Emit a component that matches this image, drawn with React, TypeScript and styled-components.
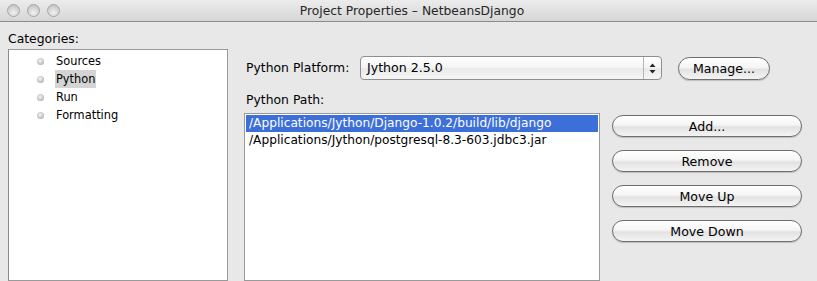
import React from 'react';
import styled, { createGlobalStyle } from 'styled-components';

const GlobalStyle = createGlobalStyle`
    html, body {
        margin: 0;
        padding: 0;
        background: #e8e8e8;
        overflow: hidden;
    }
    body {
        font-family: 'DejaVu Sans', 'Liberation Sans', sans-serif;
        font-size: 12px;
        color: #000;
    }
`;

const categories = ['Sources', 'Python', 'Run', 'Formatting'];
const paths = [
    '/Applications/Jython/Django-1.0.2/build/lib/django',
    '/Applications/Jython/postgresql-8.3-603.jdbc3.jar',
];
const actions = ['Add...', 'Remove', 'Move Up', 'Move Down'];

export default function App() {
    return (
        <Window>
            <GlobalStyle />
            <TitleBar>
                <Lights>
                    <Light />
                    <Light />
                    <Light />
                </Lights>
                <Title>Project Properties – NetbeansDjango</Title>
            </TitleBar>
            <Body>
                <LeftColumn>
                    <Label>Categories:</Label>
                    <CategoryList>
                        {categories.map((name) => (
                            <CategoryRow key={name}>
                                <Bullet />
                                <CategoryName selected={name === 'Python'}>{name}</CategoryName>
                            </CategoryRow>
                        ))}
                    </CategoryList>
                </LeftColumn>
                <RightColumn>
                    <PlatformRow>
                        <Label>Python Platform:</Label>
                        <Combo>
                            <ComboText>Jython 2.5.0</ComboText>
                            <ComboArrows>
                                <svg width="7" height="11" viewBox="0 0 7 11">
                                    <path d="M3.5 0.5 L6.5 4 L0.5 4 Z" fill="#222" />
                                    <path d="M0.5 7 L6.5 7 L3.5 10.5 Z" fill="#222" />
                                </svg>
                            </ComboArrows>
                        </Combo>
                        <PillButton width={92} height={23}>Manage...</PillButton>
                    </PlatformRow>
                    <PathLabel>Python Path:</PathLabel>
                    <PathArea>
                        <PathList>
                            {paths.map((p, i) => (
                                <PathRow key={p} selected={i === 0}>
                                    {p}
                                </PathRow>
                            ))}
                        </PathList>
                        <ButtonColumn>
                            {actions.map((a) => (
                                <PillButton key={a} width={190} height={22}>
                                    {a}
                                </PillButton>
                            ))}
                        </ButtonColumn>
                    </PathArea>
                </RightColumn>
            </Body>
        </Window>
    );
}

const Window = styled.div`
    width: 817px;
    height: 281px;
    display: flex;
    flex-direction: column;
    background: #e8e8e8;
    overflow: hidden;
`;

const TitleBar = styled.div`
    position: relative;
    height: 21px;
    flex: none;
    display: flex;
    align-items: center;
    justify-content: center;
    background: linear-gradient(#ececec, #d6d6d6);
    border-bottom: 1px solid #8c8c8c;
`;

const Lights = styled.div`
    position: absolute;
    left: 7px;
    top: 4px;
    display: flex;
    gap: 7px;
`;

const Light = styled.span`
    width: 13px;
    height: 13px;
    border-radius: 50%;
    border: 1px solid #a6a6a6;
    box-sizing: border-box;
    background: radial-gradient(circle at 50% 70%, #f2f2f2, #cfcfcf 60%, #bdbdbd);
`;

const Title = styled.span`
    font-size: 12.3px;
    color: #262626;
    padding-left: 7px;
`;

const Body = styled.div`
    flex: 1;
    display: flex;
    min-height: 0;
`;

const LeftColumn = styled.div`
    width: 220px;
    margin-left: 8px;
    display: flex;
    flex-direction: column;
    padding-top: 9px;
`;

const Label = styled.div`
    font-size: 12.4px;
    line-height: 16px;
    white-space: nowrap;
`;

const CategoryList = styled.div`
    flex: 1;
    margin-top: 2px;
    background: #fff;
    border: 1px solid #9a9a9a;
    border-left-color: #8a8a8a;
    padding-top: 2px;
`;

const CategoryRow = styled.div`
    height: 18px;
    display: flex;
    align-items: center;
    padding-left: 28px;
`;

const Bullet = styled.span`
    width: 7px;
    height: 7px;
    border-radius: 50%;
    margin-right: 11px;
    background: radial-gradient(circle at 45% 40%, #f6f6f6, #bcbcbc 65%, #8e8e8e);
`;

const CategoryName = styled.span<{ selected?: boolean }>`
    font-size: 11.4px;
    line-height: 18px;
    padding: 0 1px;
    background: ${(p) => (p.selected ? '#d4d4d4' : 'transparent')};
`;

const RightColumn = styled.div`
    flex: 1;
    display: flex;
    flex-direction: column;
    margin-left: 16px;
    padding-top: 34px;
`;

const PlatformRow = styled.div`
    display: flex;
    align-items: center;
    height: 24px;
    padding-left: 2px;
    ${Label} {
        width: 114px;
    }
`;

const Combo = styled.div`
    width: 302px;
    height: 24px;
    box-sizing: border-box;
    display: flex;
    border: 1px solid #8e8e8e;
    border-radius: 4px;
    background: linear-gradient(#ffffff, #f4f4f4 50%, #e9e9e9 51%, #f6f6f6);
    margin-right: 16px;
`;

const ComboText = styled.span`
    flex: 1;
    font-size: 12.6px;
    line-height: 22px;
    padding-left: 6px;
`;

const ComboArrows = styled.span`
    width: 17px;
    border-left: 1px solid #b5b5b5;
    display: flex;
    align-items: center;
    justify-content: center;
`;

const PillButton = styled.button<{ width: number; height: number }>`
    width: ${(p) => p.width}px;
    height: ${(p) => p.height}px;
    flex: none;
    box-sizing: border-box;
    border: 1px solid #6e6e6e;
    border-radius: 12px;
    background: linear-gradient(#ffffff, #f5f5f5 45%, #e2e2e2 55%, #f4f4f4);
    box-shadow: 0 1px 1px rgba(0, 0, 0, 0.18);
    font-family: inherit;
    font-size: 12.6px;
    color: #000;
    padding: 0;
`;

const PathLabel = styled(Label)`
    margin-top: 12px;
    padding-left: 2px;
`;

const PathArea = styled.div`
    flex: 1;
    display: flex;
    margin-top: 5px;
    min-height: 0;
`;

const PathList = styled.div`
    width: 356px;
    box-sizing: border-box;
    background: #fff;
    border: 1px solid #9a9a9a;
    padding: 1px;
`;

const PathRow = styled.div<{ selected?: boolean }>`
    height: 17px;
    line-height: 17px;
    font-size: 12.2px;
    padding-left: 3px;
    white-space: nowrap;
    background: ${(p) => (p.selected ? '#3d6fd9' : 'transparent')};
    color: ${(p) => (p.selected ? '#fff' : '#000')};
`;

const ButtonColumn = styled.div`
    display: flex;
    flex-direction: column;
    gap: 13px;
    margin-left: 12px;
    padding-top: 2px;
`;
